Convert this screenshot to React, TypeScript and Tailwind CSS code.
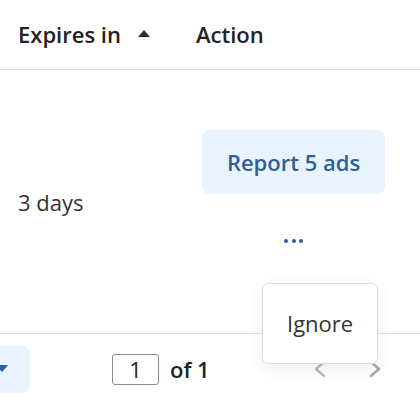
const App = () => {
  return (
    <div className="relative w-[420px] h-[402px] overflow-hidden bg-white text-[#222] font-['Open_Sans',sans-serif]">
      {/* Header */}
      <div className="grid grid-cols-[196px_1fr] h-[70px] items-center border-b border-[#e0e0e0]">
        <div className="flex items-center pl-[18px] text-[22px] font-semibold">
          <span>Expires in</span>
          <svg width="12" height="8" viewBox="0 0 12 8" className="ml-[17px] mt-[-2px]">
            <polygon points="6,0 12,7 0,7" fill="#2b2b2b" />
          </svg>
        </div>
        <div className="text-[22px] font-semibold">Action</div>
      </div>

      {/* Row */}
      <div className="grid grid-cols-[196px_1fr] h-[264px] border-b border-[#e0e0e0]">
        <div className="flex items-center pl-[18px] pt-[1px] text-[22px] text-[#333]">3 days</div>
        <div className="flex flex-col items-start pl-[6px] pt-[60px]">
          <button className="w-[183px] h-[64px] rounded-lg bg-[#e8f3fd] text-[22px] font-semibold text-[#2e5f95]">
            Report 5 ads
          </button>
          <div className="w-[183px] flex justify-center gap-[3.5px] mt-[45px]">
            <span className="w-[4px] h-[4px] rounded-full bg-[#2e5f95]" />
            <span className="w-[4px] h-[4px] rounded-full bg-[#2e5f95]" />
            <span className="w-[4px] h-[4px] rounded-full bg-[#2e5f95]" />
          </div>
        </div>
      </div>

      {/* Footer */}
      <div className="flex items-center h-[67px] pt-[3px]">
        <div className="-ml-[40px] w-[70px] h-[47px] rounded-lg bg-[#e8f3fd] flex items-center justify-end pr-[22px]">
          <svg width="12" height="8" viewBox="0 0 12 8">
            <polygon points="0,0 12,0 6,7" fill="#2e5f95" />
          </svg>
        </div>
        <div className="ml-[82px] w-[47px] h-[31px] border border-[#8a8a8a] rounded-[3px] flex items-center justify-center text-[22px] font-medium">
          1
        </div>
        <span className="ml-[11px] text-[22px] font-semibold">of 1</span>
        <svg width="14" height="18" viewBox="0 0 14 18" className="ml-[103px]">
          <polyline points="11,2 3,9 11,16" fill="none" stroke="#bdbdbd" strokeWidth="2.5" strokeLinecap="round" strokeLinejoin="round" />
        </svg>
        <svg width="14" height="18" viewBox="0 0 14 18" className="ml-[41px]">
          <polyline points="3,2 11,9 3,16" fill="none" stroke="#a6a6a6" strokeWidth="2.5" strokeLinecap="round" strokeLinejoin="round" />
        </svg>
      </div>

      {/* Menu popover */}
      <div className="absolute left-[262px] top-[283px] w-[116px] h-[81px] rounded-md border border-[#dcdcdc] bg-white shadow-[0_4px_16px_rgba(0,0,0,0.08)] flex items-center pl-[24px] text-[22px] text-[#333]">
        Ignore
      </div>
    </div>
  );
};

export default App;
